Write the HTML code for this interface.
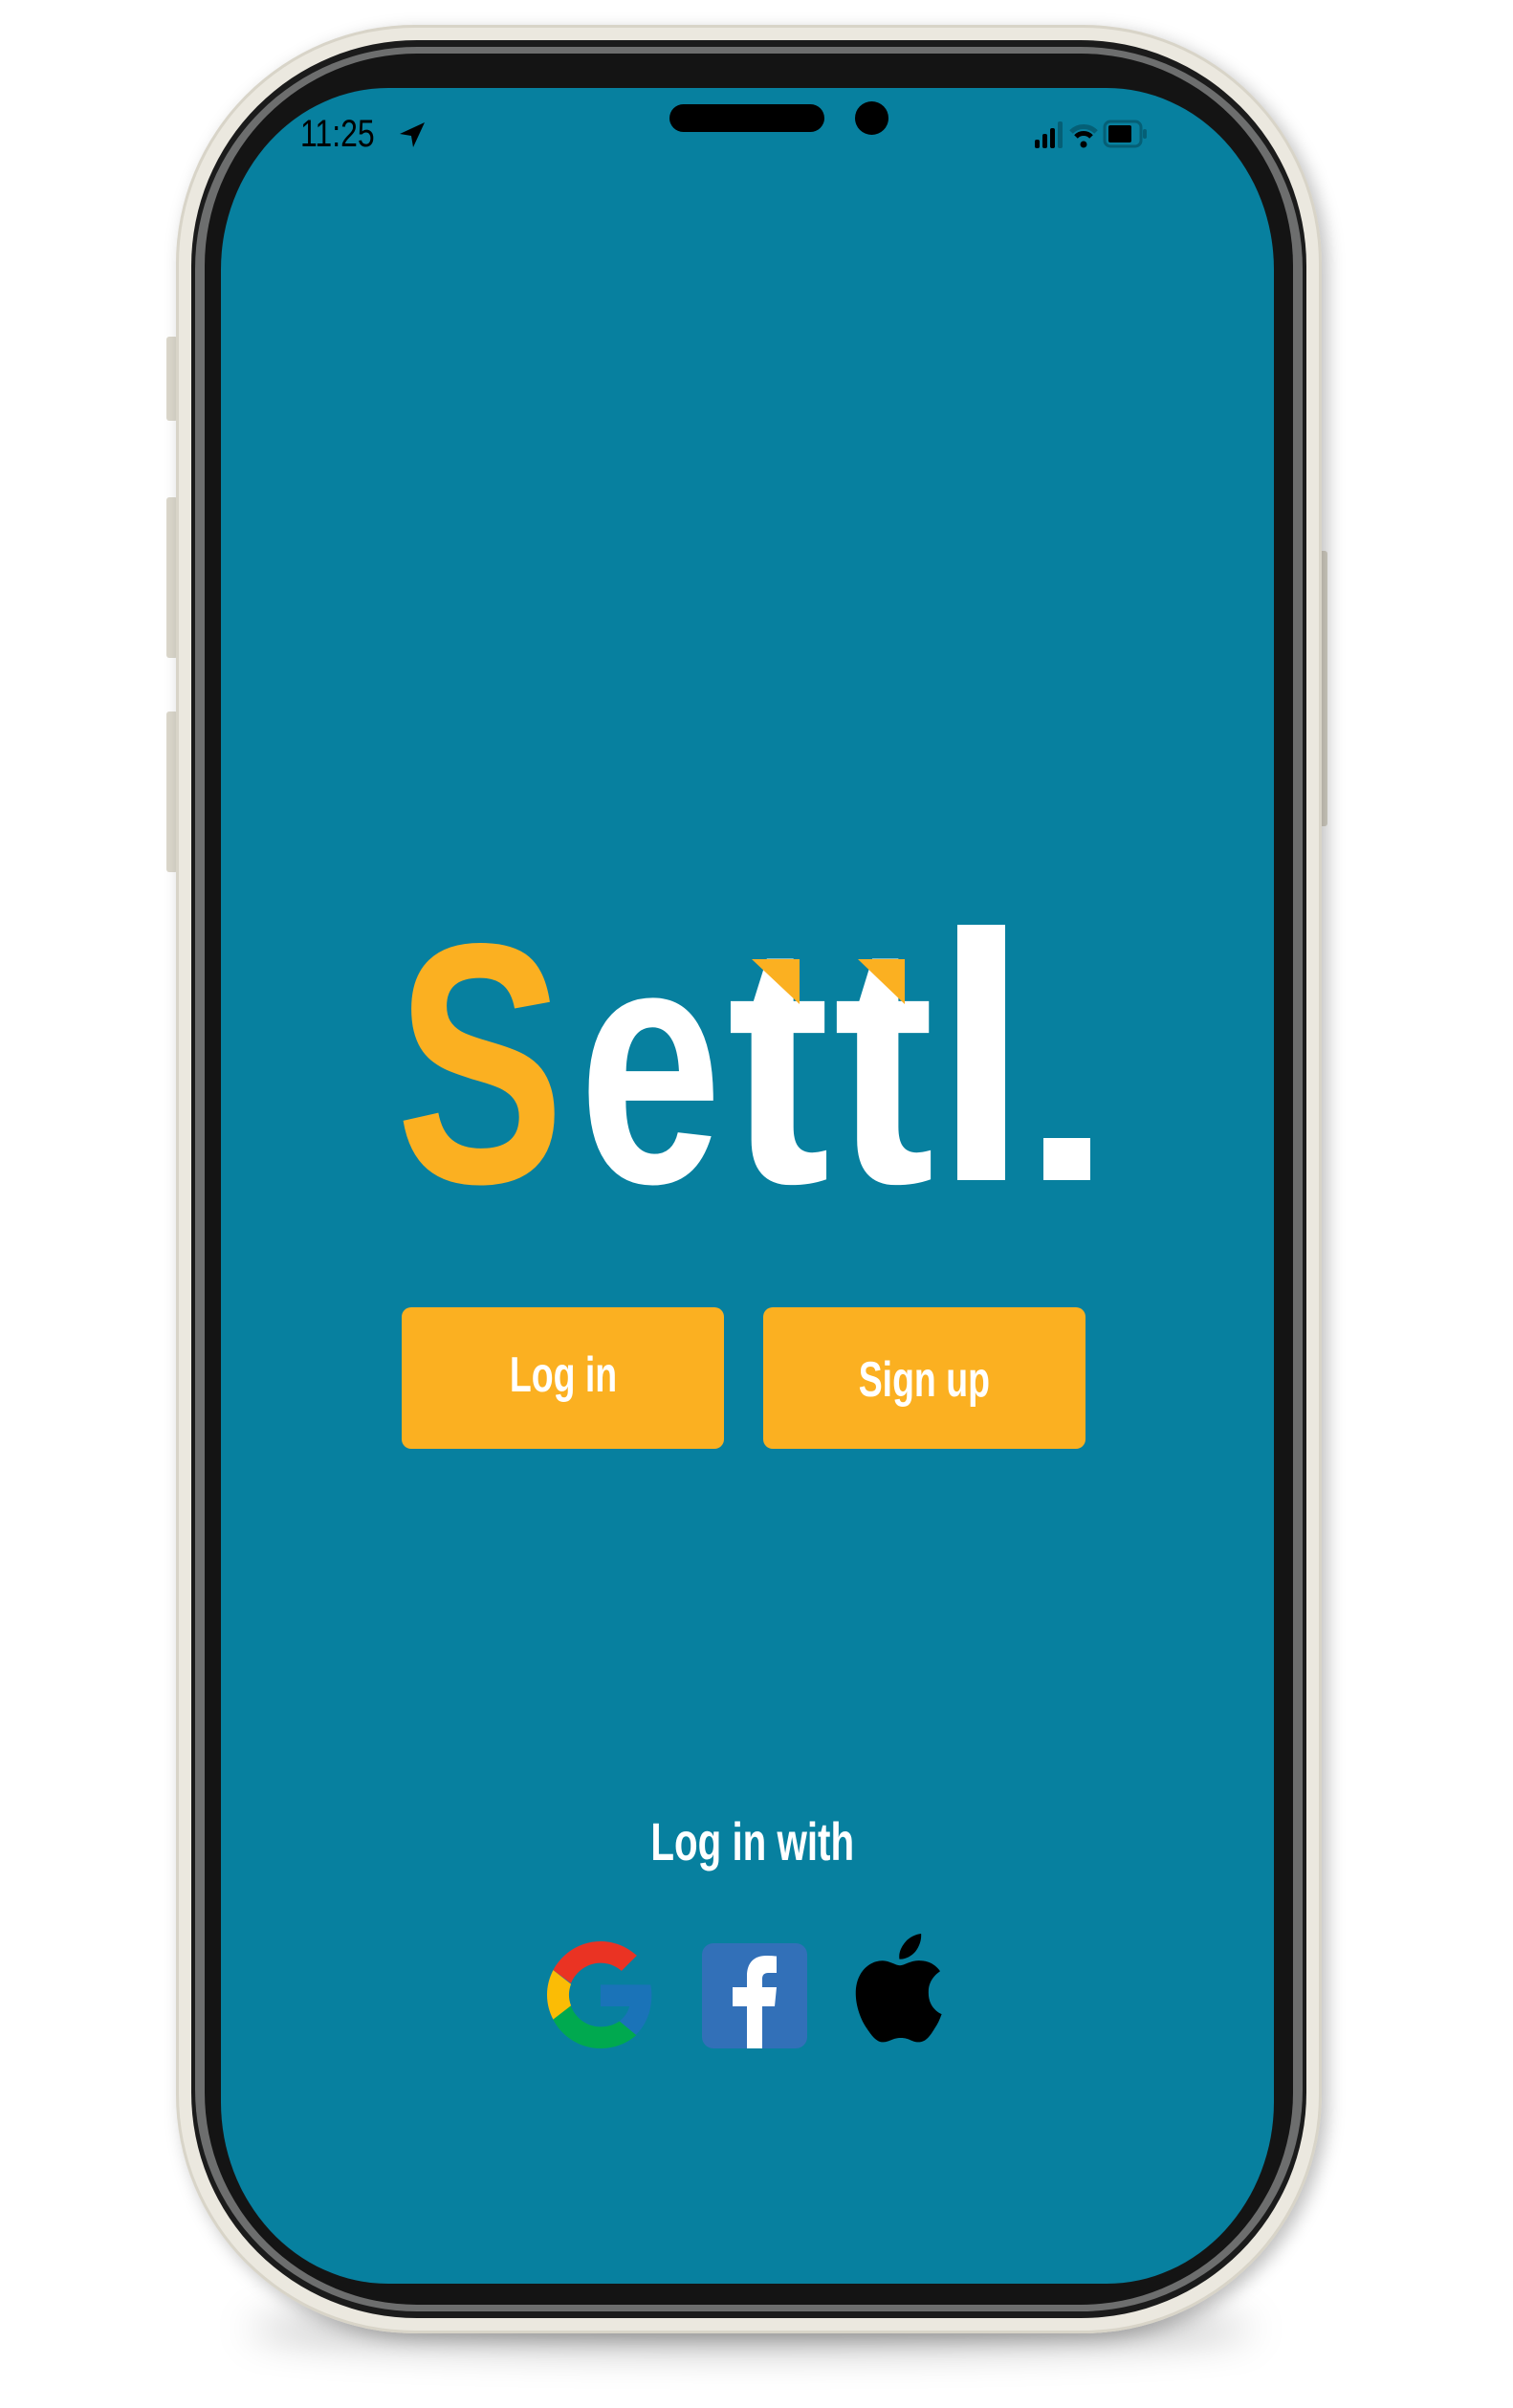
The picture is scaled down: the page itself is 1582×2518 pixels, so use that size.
<!DOCTYPE html>
<html><head><meta charset="utf-8"><style>
html,body{margin:0;padding:0;background:#fff;}
body{width:1582px;height:2518px;position:relative;overflow:hidden;font-family:"Liberation Sans",sans-serif;}
.abs{position:absolute;}
.shadow{left:260px;top:2415px;width:1050px;height:40px;border-radius:50%;background:rgba(0,0,0,0.3);filter:blur(20px);}
.frame{left:184px;top:26px;width:1198px;height:2414px;border-radius:250px;background:#ebe8df;box-shadow:inset 0 0 0 3px #d8d4c8, 6px 6px 18px rgba(0,0,0,0.25);}
.b1{left:200px;top:42px;width:1166px;height:2382px;border-radius:236px;background:#1b1b1b;}
.b2{left:204px;top:49px;width:1158px;height:2368px;border-radius:232px;background:#6d6e6e;}
.b3{left:214px;top:56px;width:1138px;height:2354px;border-radius:222px;background:#141414;}
.screen{left:231px;top:92px;width:1101px;height:2296px;border-radius:175px/190px;background:#07809f;}
.side{background:#dcd8cc;border-radius:3px;}
.btn{background:#fbb021;border-radius:10px;color:#fff;font-weight:bold;font-size:52px;text-align:center;}
.btn span{display:inline-block;transform:scaleX(0.72);}
</style></head><body>
<div class="abs shadow"></div>
<div class="abs side" style="left:174px;top:352px;width:12px;height:88px"></div>
<div class="abs side" style="left:174px;top:520px;width:12px;height:168px"></div>
<div class="abs side" style="left:174px;top:744px;width:12px;height:168px"></div>
<div class="abs side" style="left:1378px;top:576px;width:10px;height:288px"></div>
<div class="abs frame"></div>
<div class="abs b1"></div>
<div class="abs b2"></div>
<div class="abs b3"></div>
<div class="abs screen"></div>

<!-- status bar -->
<div class="abs" style="left:314px;top:118px;font-size:40px;color:#000;transform:scaleX(0.8);transform-origin:left top;">11:25</div>
<svg class="abs" style="left:416px;top:126px" width="30" height="30" viewBox="0 0 30 30"><path d="M28 2 L2 14 L14 16 L16 28 Z" fill="#000"/></svg>
<div class="abs" style="left:700px;top:109px;width:162px;height:29px;border-radius:15px;background:#000"></div>
<div class="abs" style="left:894px;top:106px;width:35px;height:35px;border-radius:50%;background:#000"></div>
<svg class="abs" style="left:1082px;top:124px" width="170" height="32" viewBox="0 0 170 32">
<rect x="0" y="22" width="5" height="9" rx="2" fill="#000"/>
<rect x="8" y="16" width="5" height="15" rx="2" fill="#000"/>
<rect x="16" y="10" width="5" height="21" rx="2" fill="#000"/>
<rect x="24" y="3" width="5" height="28" rx="2" fill="#055f76"/>
<path d="M38 14 A18 18 0 0 1 64 14" stroke="#055f76" stroke-width="5" fill="none"/>
<path d="M43 19 A11 11 0 0 1 59 19" stroke="#000" stroke-width="5" fill="none"/>
<circle cx="51" cy="27" r="3.5" fill="#000"/>
<rect x="73" y="3" width="38" height="26" rx="6" fill="none" stroke="#055f76" stroke-width="3"/>
<rect x="77" y="7" width="24" height="18" rx="2" fill="#000"/>
<rect x="113" y="11" width="4" height="10" rx="2" fill="#055f76"/>
</svg>

<!-- logo -->
<svg class="abs" style="left:0;top:0" width="1582" height="1300" viewBox="0 0 1582 1300">
<g font-family="Liberation Sans, sans-serif" font-weight="bold" font-size="358">
<text x="414" y="1236" textLength="176" lengthAdjust="spacingAndGlyphs" fill="#fbb021">S</text>
<text x="605" y="1236" textLength="150" lengthAdjust="spacingAndGlyphs" fill="#fff">e</text>
<text x="760" y="1236" textLength="108" lengthAdjust="spacingAndGlyphs" fill="#fff">t</text>
<text x="871" y="1236" textLength="106" lengthAdjust="spacingAndGlyphs" fill="#fff">t</text>
</g>
<rect x="1001" y="967" width="50" height="267" fill="#fff"/>
<rect x="1091" y="1190" width="49" height="44" fill="#fff"/>
<polygon points="786,1003 836,1003 836,1050" fill="#fbb021"/>
<polygon points="897,1003 946,1003 946,1050" fill="#fbb021"/>
</svg>

<div class="abs btn" style="left:420px;top:1367px;width:337px;height:148px;line-height:142px"><span>Log in</span></div>
<div class="abs btn" style="left:798px;top:1367px;width:337px;height:148px;line-height:152px"><span>Sign up</span></div>

<div class="abs" style="left:587px;top:1893px;width:400px;text-align:center;color:#fff;font-weight:bold;font-size:56px;"><span style="display:inline-block;transform:scaleX(0.72)">Log in with</span></div>

<!-- google -->
<svg class="abs" style="left:572px;top:2030px" width="112" height="112" viewBox="3 3 42 42">
<path d="M43.6 20H24v8.5h11.3C34 33.5 29.5 36.5 24 36.5c-6.9 0-12.5-5.6-12.5-12.5S17.1 11.5 24 11.5c3.1 0 6 1.2 8.2 3.1l6-6C34.6 5.3 29.6 3 24 3 12.4 3 3 12.4 3 24s9.4 21 21 21c10.5 0 20-7.6 20-21 0-1.3-.1-2.6-.4-4z" fill="#1a73b8"/>
<path d="M5.4 14.3l7 5.1C14.2 15 18.7 11.5 24 11.5c3.1 0 6 1.2 8.2 3.1l6-6C34.6 5.3 29.6 3 24 3 16 3 9 7.6 5.4 14.3z" fill="#ea3323"/>
<path d="M24 45c5.4 0 10.3-1.9 14-5.2l-6.6-5.5c-2 1.4-4.6 2.2-7.4 2.2-5.4 0-10-3.5-11.7-8.3l-7 5.4C8.8 40.3 15.8 45 24 45z" fill="#00a94f"/>
<path d="M5.4 14.3C3.9 17.2 3 20.5 3 24s.9 6.8 2.4 9.6l7-5.4c-.5-1.3-.8-2.7-.8-4.2s.3-2.9.8-4.2z" fill="#fbbc05"/>
</svg>
<!-- facebook -->
<svg class="abs" style="left:734px;top:2032px" width="110" height="110" viewBox="0 0 110 110">
<rect width="110" height="110" rx="12" fill="#3270b8"/>
<path d="M47 110V66H32V46h15V34c0-14 8-21 20-21 6 0 10 .5 11 .6V31h-8c-6 0-7 3-7 7v8h15l-2 20H63v44z" fill="#fff"/>
</svg>
<!-- apple -->
<svg class="abs" style="left:894px;top:2022px" width="94" height="114" viewBox="0 0 170 206">
<path d="M139 110c0-26 21-38 22-39-12-18-31-20-37-20-16-2-31 9-39 9s-20-9-33-9C35 51 19 61 10 77c-18 31-5 78 13 103 8 12 18 26 31 25 13-1 17-8 33-8s20 8 33 8c14 0 22-12 30-25 10-14 13-27 14-28-1 0-26-10-25-42zM114 34c7-9 12-21 11-34-10 1-23 7-30 16-7 8-13 20-11 32 11 1 23-6 30-14z" fill="#000"/>
</svg>
</body></html>
